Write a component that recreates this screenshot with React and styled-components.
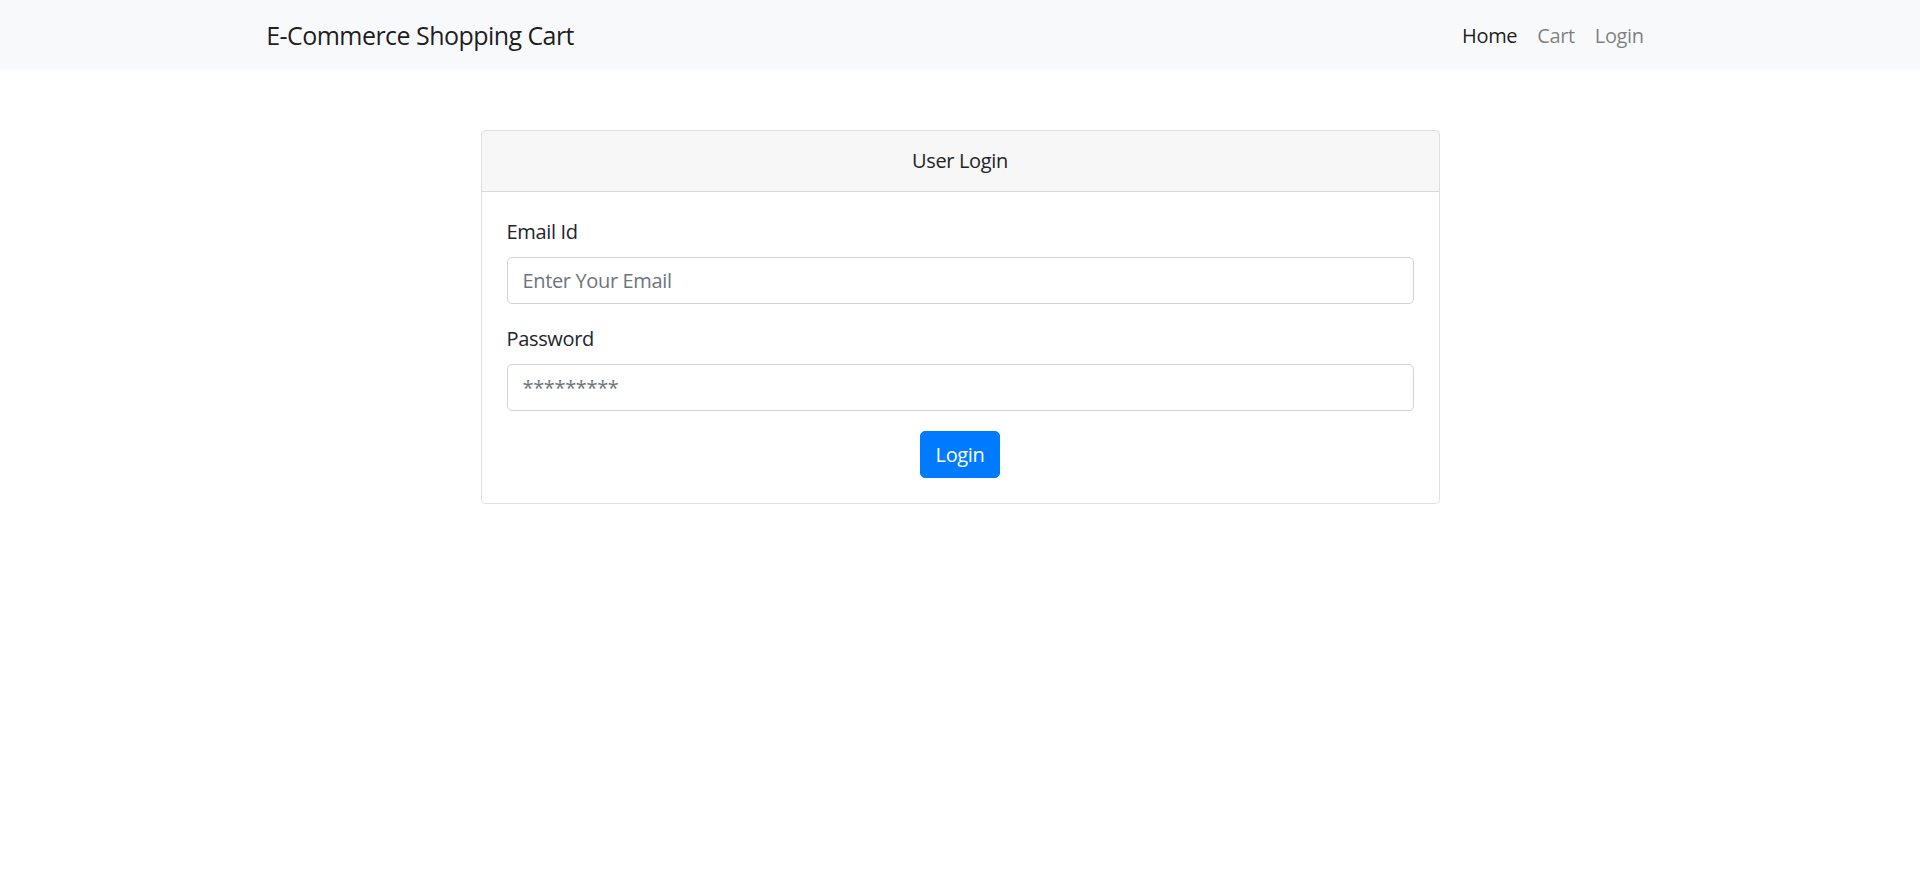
import React, { useState } from "react";
import styled, { createGlobalStyle } from "styled-components";

const GlobalStyle = createGlobalStyle`
  * {
    box-sizing: border-box;
  }

  body {
    margin: 0;
    font-family: "Open Sans", "Noto Sans", sans-serif;
    font-size: 20px;
    line-height: 1.5;
    letter-spacing: -0.35px;
    color: #212529;
    background: #fff;
  }
`;

const App = () => {
  const [email, setEmail] = useState("");
  const [password, setPassword] = useState("");

  const handleLogin = (e) => {
    e.preventDefault();
  };

  return (
    <>
      <GlobalStyle />
      <Navbar>
        <NavContainer>
          <Brand href="#">E-Commerce Shopping Cart</Brand>
          <NavList>
            <NavLink href="#" active>
              Home
            </NavLink>
            <NavLink href="#">Cart</NavLink>
            <NavLink href="#">Login</NavLink>
          </NavList>
        </NavContainer>
      </Navbar>

      <Card>
        <CardHeader>User Login</CardHeader>
        <CardBody onSubmit={handleLogin}>
          <FormGroup>
            <Label htmlFor="email">Email Id</Label>
            <Input
              id="email"
              type="email"
              placeholder="Enter Your Email"
              value={email}
              onChange={(e) => setEmail(e.target.value)}
            />
          </FormGroup>
          <FormGroup>
            <Label htmlFor="password">Password</Label>
            <Input
              id="password"
              type="password"
              placeholder="*********"
              value={password}
              onChange={(e) => setPassword(e.target.value)}
            />
          </FormGroup>
          <ButtonRow>
            <Button type="submit">Login</Button>
          </ButtonRow>
        </CardBody>
      </Card>
    </>
  );
};

const Navbar = styled.nav`
  background-color: #f8f9fa;
  height: 70px;
  padding: 11px 0 9px;
`;

const NavContainer = styled.div`
  width: 1425px;
  margin: 0 auto;
  padding: 0 18.75px;
  height: 100%;
  display: flex;
  align-items: center;
  justify-content: space-between;
`;

const Brand = styled.a`
  font-size: 25px;
  line-height: 37.5px;
  letter-spacing: -0.55px;
  color: rgba(0, 0, 0, 0.9);
  text-decoration: none;
`;

const NavList = styled.div`
  display: flex;
  align-items: center;
`;

const NavLink = styled.a`
  padding: 10px;
  color: ${(p) => (p.active ? "rgba(0, 0, 0, 0.9)" : "rgba(0, 0, 0, 0.5)")};
  text-decoration: none;
`;

const Card = styled.div`
  width: 959px;
  margin: 60px auto 0;
  border: 1.25px solid rgba(0, 0, 0, 0.125);
  border-radius: 5px;
  background: #fff;
`;

const CardHeader = styled.div`
  padding: 15px 25px;
  background-color: rgba(0, 0, 0, 0.03);
  border-bottom: 1.25px solid rgba(0, 0, 0, 0.125);
  border-radius: 4px 4px 0 0;
  text-align: center;
  line-height: 30px;
`;

const CardBody = styled.form`
  padding: 25px;
  display: flex;
  flex-direction: column;
`;

const FormGroup = styled.div`
  display: flex;
  flex-direction: column;
  margin-bottom: 20px;
`;

const Label = styled.label`
  margin-bottom: 10px;
  line-height: 30px;
`;

const Input = styled.input`
  height: 47px;
  padding: 7.5px 15px;
  font-family: inherit;
  font-size: 20px;
  letter-spacing: inherit;
  color: #495057;
  border: 1.25px solid #ced4da;
  border-radius: 5px;
  outline: none;

  &::placeholder {
    color: #6c757d;
  }
`;

const ButtonRow = styled.div`
  display: flex;
  justify-content: center;
`;

const Button = styled.button`
  height: 47px;
  padding: 7.5px 15px;
  font-family: inherit;
  font-size: 20px;
  line-height: 30px;
  letter-spacing: inherit;
  color: #fff;
  background-color: #007bff;
  border: 1.25px solid #007bff;
  border-radius: 5px;
  cursor: pointer;

  &:hover {
    background-color: #0069d9;
  }
`;

export default App;
